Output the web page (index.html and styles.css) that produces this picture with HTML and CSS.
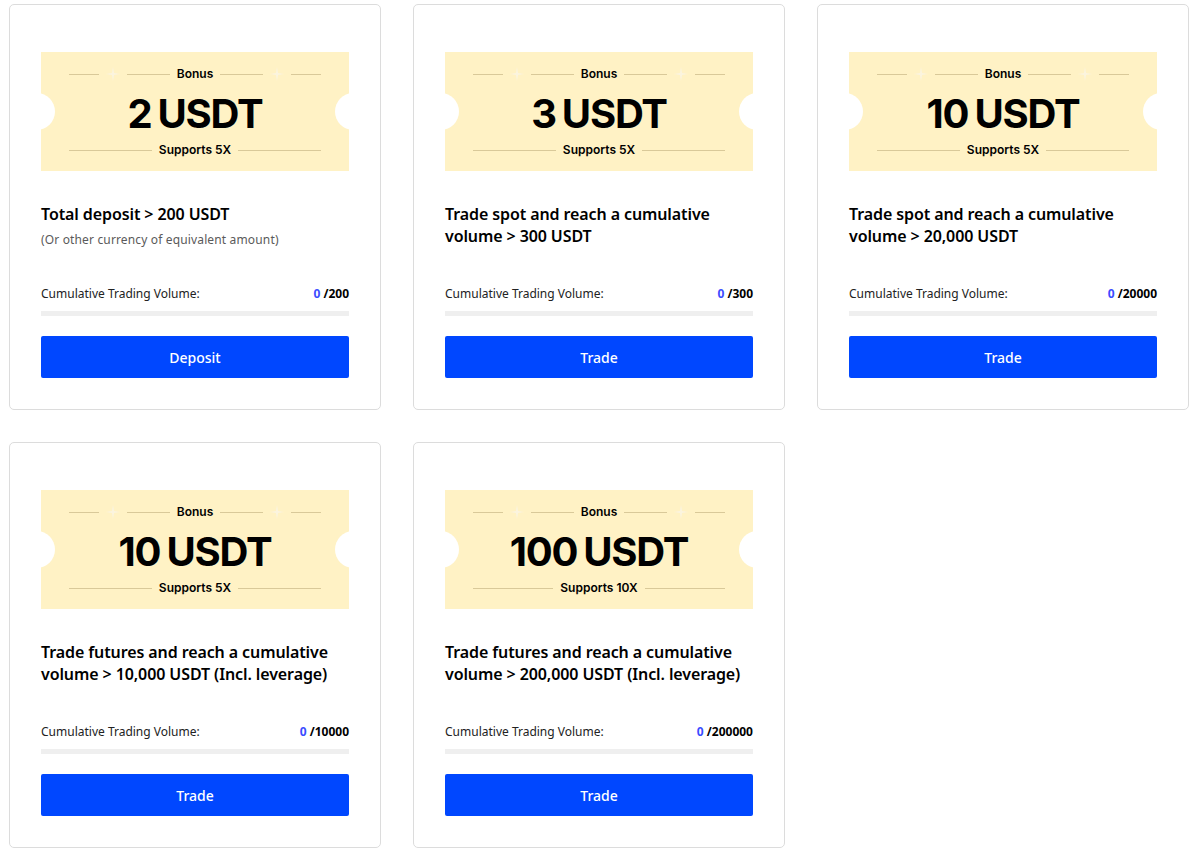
FILE: index.html
```html
<!DOCTYPE html>
<html>
<head>
<meta charset="utf-8">
<link rel="stylesheet" href="styles.css">
</head>
<body>
<div class="grid">
  <div class="card">
    <div class="ticket">
      <div class="t-row"><span class="ln short"></span><span class="star"></span><span class="ln"></span><span class="t-label">Bonus</span><span class="ln"></span><span class="star"></span><span class="ln short"></span></div>
      <div class="t-amount"><span>2</span><span>USDT</span></div>
      <div class="t-row"><span class="ln"></span><span class="t-label">Supports 5X</span><span class="ln"></span></div>
    </div>
    <div class="task">
      <div class="title">Total deposit &gt; 200 USDT</div>
      <div class="sub">(Or other currency of equivalent amount)</div>
    </div>
    <div class="progress-label"><span>Cumulative Trading Volume:</span><span class="val"><span class="cur">0</span> /200</span></div>
    <div class="bar"></div>
    <button class="btn">Deposit</button>
  </div>

  <div class="card">
    <div class="ticket">
      <div class="t-row"><span class="ln short"></span><span class="star"></span><span class="ln"></span><span class="t-label">Bonus</span><span class="ln"></span><span class="star"></span><span class="ln short"></span></div>
      <div class="t-amount"><span>3</span><span>USDT</span></div>
      <div class="t-row"><span class="ln"></span><span class="t-label">Supports 5X</span><span class="ln"></span></div>
    </div>
    <div class="task">
      <div class="title">Trade spot and reach a cumulative volume &gt; 300 USDT</div>
    </div>
    <div class="progress-label"><span>Cumulative Trading Volume:</span><span class="val"><span class="cur">0</span> /300</span></div>
    <div class="bar"></div>
    <button class="btn">Trade</button>
  </div>

  <div class="card">
    <div class="ticket">
      <div class="t-row"><span class="ln short"></span><span class="star"></span><span class="ln"></span><span class="t-label">Bonus</span><span class="ln"></span><span class="star"></span><span class="ln short"></span></div>
      <div class="t-amount"><span>10</span><span>USDT</span></div>
      <div class="t-row"><span class="ln"></span><span class="t-label">Supports 5X</span><span class="ln"></span></div>
    </div>
    <div class="task">
      <div class="title">Trade spot and reach a cumulative volume &gt; 20,000 USDT</div>
    </div>
    <div class="progress-label"><span>Cumulative Trading Volume:</span><span class="val"><span class="cur">0</span> /20000</span></div>
    <div class="bar"></div>
    <button class="btn">Trade</button>
  </div>

  <div class="card">
    <div class="ticket">
      <div class="t-row"><span class="ln short"></span><span class="star"></span><span class="ln"></span><span class="t-label">Bonus</span><span class="ln"></span><span class="star"></span><span class="ln short"></span></div>
      <div class="t-amount"><span>10</span><span>USDT</span></div>
      <div class="t-row"><span class="ln"></span><span class="t-label">Supports 5X</span><span class="ln"></span></div>
    </div>
    <div class="task">
      <div class="title">Trade futures and reach a cumulative volume &gt; 10,000 USDT (Incl. leverage)</div>
    </div>
    <div class="progress-label"><span>Cumulative Trading Volume:</span><span class="val"><span class="cur">0</span> /10000</span></div>
    <div class="bar"></div>
    <button class="btn">Trade</button>
  </div>

  <div class="card">
    <div class="ticket">
      <div class="t-row"><span class="ln short"></span><span class="star"></span><span class="ln"></span><span class="t-label">Bonus</span><span class="ln"></span><span class="star"></span><span class="ln short"></span></div>
      <div class="t-amount"><span>100</span><span>USDT</span></div>
      <div class="t-row"><span class="ln"></span><span class="t-label">Supports 10X</span><span class="ln"></span></div>
    </div>
    <div class="task">
      <div class="title">Trade futures and reach a cumulative volume &gt; 200,000 USDT (Incl. leverage)</div>
    </div>
    <div class="progress-label"><span>Cumulative Trading Volume:</span><span class="val"><span class="cur">0</span> /200000</span></div>
    <div class="bar"></div>
    <button class="btn">Trade</button>
  </div>
</div>
</body>
</html>
```

FILE: styles.css
```css
* { box-sizing: border-box; }
html, body { margin: 0; padding: 0; background: #fff; }
body {
  font-family: "Noto Sans", "Liberation Sans", sans-serif;
  color: #000;
}
.grid {
  display: grid;
  grid-template-columns: repeat(3, 372px);
  column-gap: 32px;
  row-gap: 32px;
  padding: 4px 0 0 9px;
}
.card {
  border: 1px solid #dcdcdc;
  border-radius: 5px;
  padding: 47px 31px 31px;
  height: 406px;
  display: flex;
  flex-direction: column;
}
.ticket {
  position: relative;
  background: #fff2c5;
  height: 120px;
  padding: 15px 28px 0;
  display: flex;
  flex-direction: column;
}
.ticket::before, .ticket::after {
  content: "";
  position: absolute;
  top: 41px;
  width: 36px;
  height: 37px;
  border-radius: 50%;
  background: #fff;
}
.ticket::before { left: -22px; }
.ticket::after { right: -22px; }
.t-row {
  display: flex;
  align-items: center;
  gap: 6px;
  height: 14px;
}
.ln { flex: 1; height: 1px; background: #d9c999; }
.ln.short { flex: 0 0 30px; }
.star {
  width: 14px;
  height: 14px;
  margin: 0 1px;
  background: #fbf4de;
  clip-path: polygon(50% 0, 58% 42%, 100% 50%, 58% 58%, 50% 100%, 42% 58%, 0 50%, 42% 42%);
}
.t-label {
  font-family: "Inter", "Noto Sans", sans-serif;
  font-size: 12px;
  font-weight: 600;
  line-height: 14px;
  padding: 0 1px;
}
.t-amount {
  font-family: "Inter", "Noto Sans", sans-serif;
  font-weight: 700;
  font-size: 40px;
  line-height: 48px;
  letter-spacing: -1.2px;
  text-align: center;
  margin: 9px 0 5px;
  display: flex;
  justify-content: center;
  gap: 6px;
}
.task {
  margin-top: 32px;
  height: 44px;
}
.title {
  font-size: 16px;
  font-weight: 600;
  line-height: 22px;
  letter-spacing: -0.1px;
  color: #000;
}
.sub {
  font-size: 12px;
  line-height: 18px;
  letter-spacing: 0.15px;
  color: #5a5a5a;
  margin-top: 6px;
}
.progress-label {
  margin-top: 39px;
  display: flex;
  justify-content: space-between;
  font-size: 12px;
  line-height: 16px;
  color: #222;
}
.val { font-weight: 700; color: #000; }
.cur { color: #3b4cff; }
.bar {
  margin-top: 9px;
  height: 5px;
  background: #efefef;
}
.btn {
  margin-top: 20px;
  height: 42px;
  width: 100%;
  border: 0;
  border-radius: 2px;
  background: #0047ff;
  color: #fff;
  font-family: "Noto Sans", "Liberation Sans", sans-serif;
  font-size: 14px;
  font-weight: 500;
}
```
